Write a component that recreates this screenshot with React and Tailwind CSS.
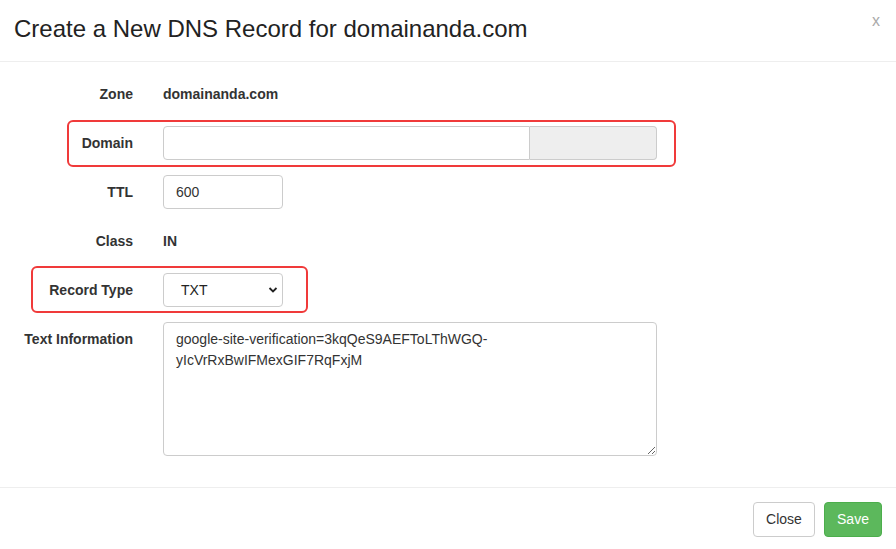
export default function App() {
  const font = { fontFamily: '"Liberation Sans", Arial, sans-serif' };
  return (
    <div className="w-[896px] h-[549px] bg-white text-[#333] overflow-hidden" style={font}>
      {/* header */}
      <div className="h-[62px] border-b border-[#eeeeee] flex items-start justify-between pl-[14px] pr-[16px]">
        <h1 className="text-[24px] leading-none mt-[17px] text-[#222]">
          Create a New DNS Record for domainanda.com
        </h1>
        <button className="text-[16px] leading-none mt-[13px] text-[#aaa]">x</button>
      </div>

      {/* body */}
      <div className="pt-[15px] pb-[31px] flex flex-col gap-[15px] text-[14px]">
        <div className="grid grid-cols-[133px_1fr] gap-x-[30px] items-center h-[34px]">
          <label className="text-right font-bold">Zone</label>
          <div className="font-bold text-[#333]">domainanda.com</div>
        </div>

        <div className="relative grid grid-cols-[133px_1fr] gap-x-[30px] items-center h-[34px]">
          <label className="text-right font-bold">Domain</label>
          <div className="flex w-[494px] h-[34px]">
            <input className="flex-1 min-w-0 border border-[#ccc] rounded-l-[4px] px-3 outline-none" />
            <span className="w-[127px] bg-[#eeeeee] border border-l-0 border-[#ccc] rounded-r-[4px]" />
          </div>
          <div className="absolute left-[67px] top-[-6px] w-[609px] h-[47px] border-2 border-[#f03a3a] rounded-[6px] pointer-events-none" />
        </div>

        <div className="grid grid-cols-[133px_1fr] gap-x-[30px] items-center h-[34px]">
          <label className="text-right font-bold">TTL</label>
          <input defaultValue="600" className="w-[120px] h-[34px] border border-[#ccc] rounded-[4px] px-3 outline-none text-[#333]" />
        </div>

        <div className="grid grid-cols-[133px_1fr] gap-x-[30px] items-center h-[34px]">
          <label className="text-right font-bold">Class</label>
          <div className="font-bold">IN</div>
        </div>

        <div className="relative grid grid-cols-[133px_1fr] gap-x-[30px] items-center h-[34px]">
          <label className="text-right font-bold">Record Type</label>
          <div className="relative w-[120px] h-[34px] border border-[#ccc] rounded-[4px] flex items-center pl-[17px] text-[#222]">
            TXT
            <svg className="absolute right-[4px] top-[12px]" width="10" height="8" viewBox="0 0 10 8">
              <path d="M1.5 2 L5 5.5 L8.5 2" fill="none" stroke="#222" strokeWidth="1.8" />
            </svg>
          </div>
          <div className="absolute left-[31px] top-[-7px] w-[277px] h-[47px] border-2 border-[#f03a3a] rounded-[6px] pointer-events-none" />
        </div>

        <div className="grid grid-cols-[133px_1fr] gap-x-[30px] items-start">
          <label className="text-right font-bold leading-[34px]">Text Information</label>
          <textarea
            defaultValue={"google-site-verification=3kqQeS9AEFToLThWGQ-\nyIcVrRxBwIFMexGIF7RqFxjM"}
            className="w-[494px] h-[134px] border border-[#ccc] rounded-[4px] px-3 py-[6px] leading-[21px] outline-none text-[#333] resize-y"
          />
        </div>
      </div>

      {/* footer */}
      <div className="border-t border-[#eeeeee] pt-[14px] pr-[14px] flex justify-end gap-[9px] text-[14px]">
        <button className="w-[62px] h-[35px] border border-[#ccc] rounded-[4px] bg-white text-[#333]">Close</button>
        <button className="w-[58px] h-[35px] border border-[#4cae4c] rounded-[4px] bg-[#5cb85c] text-white">Save</button>
      </div>
    </div>
  );
}
